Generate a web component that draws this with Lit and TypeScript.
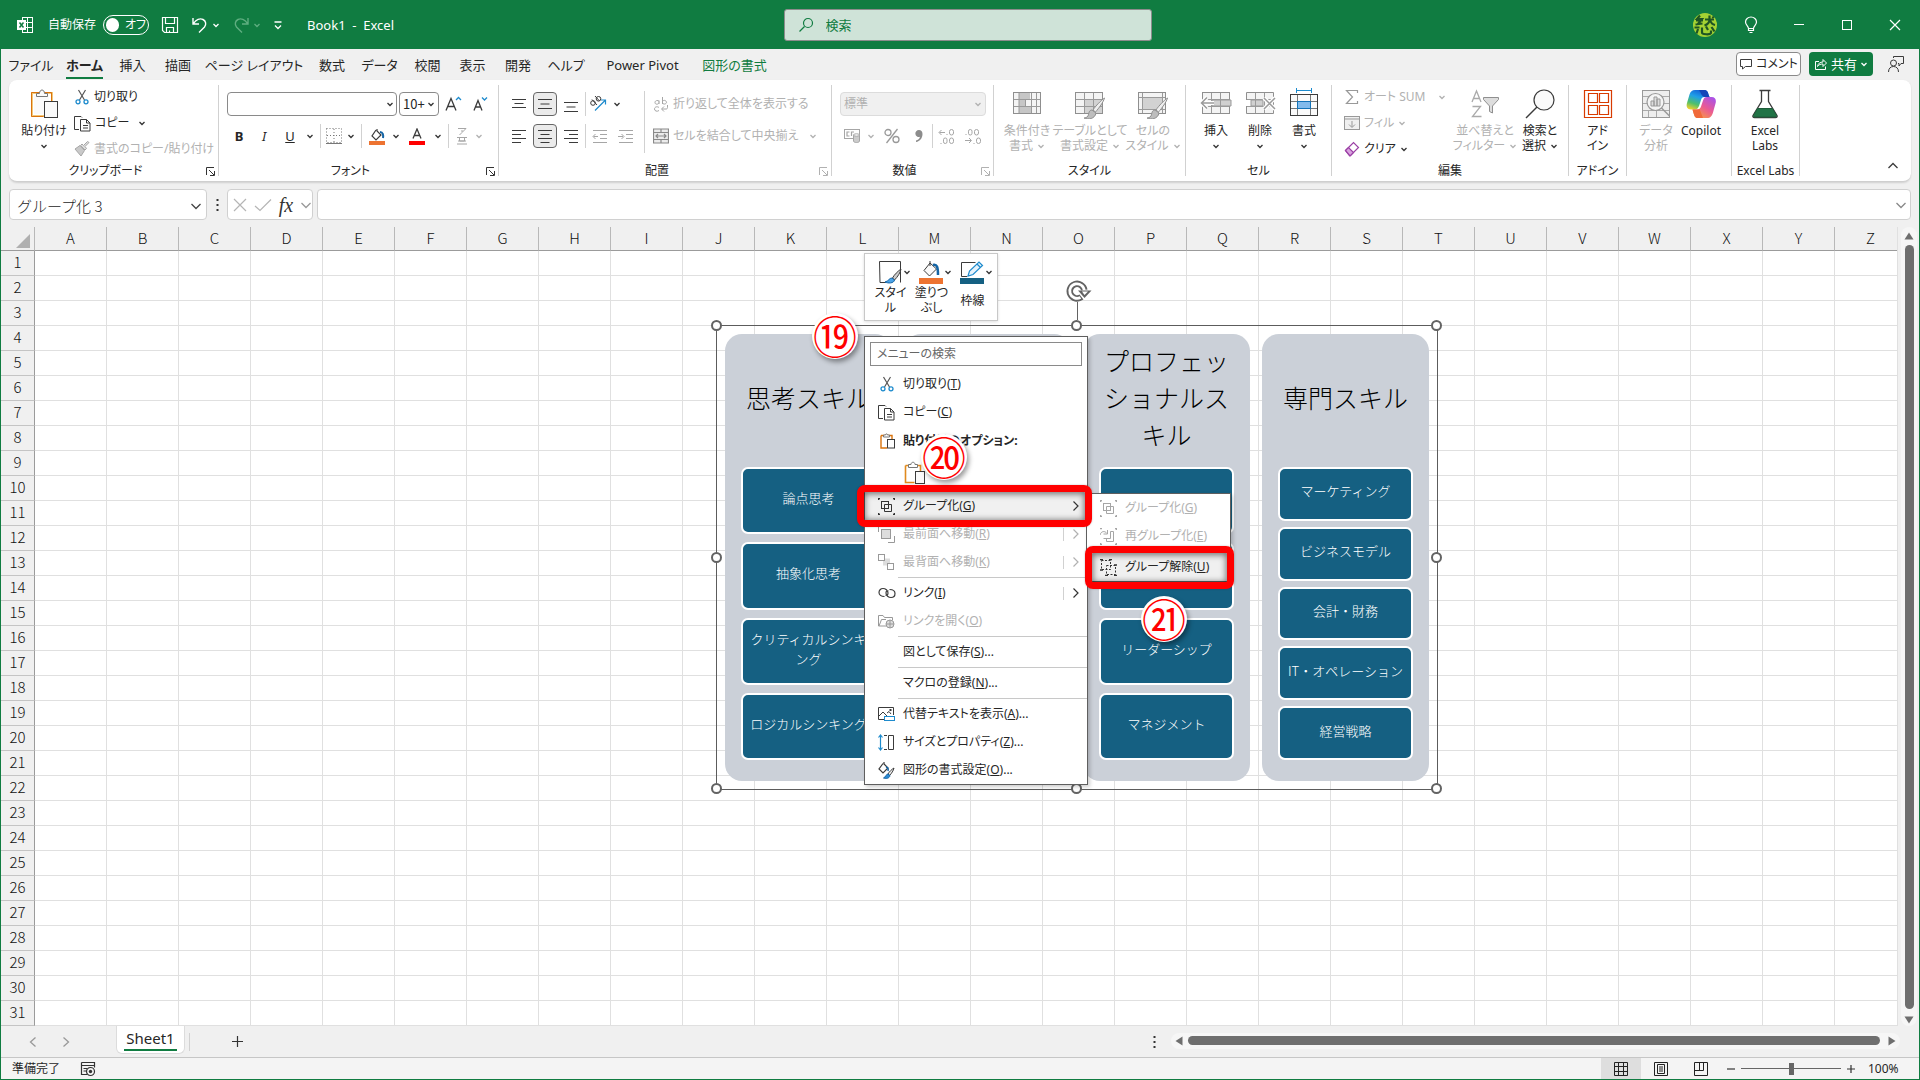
import { LitElement, html, svg, css, nothing, TemplateResult, SVGTemplateResult } from "lit";
import { customElement } from "lit/decorators.js";
import { classMap } from "lit/directives/class-map.js";

type Part = SVGTemplateResult | SVGTemplateResult[];

const icon = (w: number, h: number, body: Part): TemplateResult => html`
  <svg width=${w} height=${h} viewBox="0 0 ${w} ${h}" fill="none" stroke="#3b3b3b" aria-hidden="true">${body}</svg>
`;

const chevron = (color = "#333") => icon(8, 8, svg`<path d="M1.5 3 4 5.5 6.5 3" stroke=${color} stroke-width="1.3"/>`);
const wideChevron = (color = "#444") => icon(12, 12, svg`<path d="M1.5 4 6 8.5 10.5 4" stroke=${color} stroke-width="1.3"/>`);

const GRAY = "#a6a6a6";

const I = {
  excel: icon(18, 18, svg`<rect x="6.5" y="1.5" width="10" height="15" stroke="#fff"/><path d="M6 6.5h11M6 11.5h11M11.5 2v15" stroke="#fff"/><rect x="1" y="4" width="9" height="10" fill="#fff" stroke="none"/><path d="M3.5 6.5l4 5M7.500 6.500l-4 5" stroke="#107c41" stroke-width="1.500"/>`),
  save: icon(18, 18, svg`<path d="M1.500 1.500h15v15h-13l-2-2zM4.500 2v5.500h9V2M5.500 16.500v-5h7v5M8.500 16.500v-2" stroke="#fff" stroke-width="1.200"/>`),
  undo: icon(18, 18, svg`<path d="M2 2v6h6M2.500 7.500C5 3.500 9 2 12 3.500s3.500 5 1.500 7.500L8 16.500" stroke="#fff" stroke-width="1.400"/>`),
  redo: icon(18, 18, svg`<path d="M16 2v6h-6M15.500 7.500C13 3.500 9 2 6 3.500S2.500 8.500 4.500 11l5.500 5.500" stroke="#5fae80" stroke-width="1.400"/>`),
  customize: icon(10, 10, svg`<path d="M1.500 2h7M2 5.500 5 8.500 8 5.500" stroke="#fff" stroke-width="1.300"/>`),
  search: icon(16, 16, svg`<circle cx="10" cy="6" r="4.500" stroke="#107c41" stroke-width="1.200"/><path d="M6.500 9.500 1.500 14.500" stroke="#107c41" stroke-width="1.200"/>`),
  avatar: icon(24, 24, svg`<circle cx="12" cy="12" r="12" fill="#a4d233" stroke="none"/><path d="M7 2.500 4 6h5L4.500 11.500M3 7.500h7M2.500 11.500l7-1M12 6.500h9M16.500 2.500v4c0 3-2 5-5 6M17 7c1 3 2.500 4.500 5 5M19.500 3.500l1 1.500M5 16l-1.500 4.500M9 14.500v5c0 2 8 2.500 9 .5v-2.500M13 13.500l2 3.500M18.500 14l3 4.500M1.500 14.500h5" stroke="#1e5424" stroke-width="2.200"/>`),
  bulb: icon(14, 18, svg`<path d="M4.500 12.500C4.500 10 1.500 9 1.500 6a5.500 5 0 0 1 11 0c0 3-3 4-3 6.500zM4.500 12.500v2h5v-2M5.500 16.500h3" stroke="#fff" stroke-width="1.200"/>`),
  min: icon(12, 12, svg`<path d="M1 5.500h10" stroke="#fff"/>`),
  max: icon(12, 12, svg`<rect x="1.500" y="1.500" width="9" height="9" stroke="#fff"/>`),
  close: icon(12, 12, svg`<path d="M1 1 11 11M11 1 1 11" stroke="#fff" stroke-width="1.200"/>`),
  comment: icon(14, 14, svg`<path d="M1.500 2.500h11v7h-6l-3 2.500v-2.500h-2z"/>`),
  share: icon(14, 14, svg`<path d="M5 4.500H1.500v8h10V9.500M3.500 9.500C4 6.500 6 5 9 5V2.500l3.500 3.500L9 9.500V7C6.500 7 5 7.500 3.500 9.500z" stroke="#fff"/>`),
  person: icon(18, 18, svg`<circle cx="6.500" cy="8" r="3"/><path d="M1.500 17c0-3.500 2-5.500 5-5.500s5 2 5 5.500M6.500 3V1.500h10v7h-2.500l-2 2.500V8.500h-1"/>`),
  paste: icon(30, 30, svg`<rect x="3" y="4" width="20" height="23" fill="#fff"  stroke="#f2c879" stroke-width="2"/><path d="M2.500 3.500h20v11M2.500 3.500v24h12" stroke="#d9730d"/><rect x="5" y="6" width="15" height="19" fill="#fafafa" stroke="none"/><path d="M7.500 7.500v-3h3c0-2 1-3.500 2.500-3.500S15.500 2.500 15.500 4.500h3v3z" fill="#fafafa" stroke="#777"/><rect x="15.500" y="12.500" width="13" height="16" fill="#fafafa"/>`),
  cut: icon(16, 16, svg`<path d="M4.500 1 10.500 11M11.500 1 5.500 11" stroke="#555" stroke-width="1.200"/><circle cx="4" cy="12.800" r="2" stroke="#1e8bcd" stroke-width="1.300"/><circle cx="12" cy="12.800" r="2" stroke="#1e8bcd" stroke-width="1.300"/>`),
  copy: icon(17, 17, svg`<path d="M5 14.500H.500V1.500h6.500l1 1"/><path d="M6.500 4.500h6l3.500 3.500v8H6.500zM12.500 4.500V8H16M9 10.500h5M9 13h5"/>`),
  painter: icon(16, 16, svg`<path d="M1 8l5-3.500 4.500 5L7 15z" fill="#c9c9c9" stroke="${GRAY}"/><path d="M6.500 4.500 11 9l1.500-1.500-1.500-2L15 1.500 13.500.500 9.500 4.500 8 3z" fill="#ddd" stroke="${GRAY}"/>`),
  growA: icon(18, 18, svg`<path d="M2 15.500 7 3.500l5 12M4 11.500h6" stroke-width="1.300"/><path d="M12 5l2.500-2.500L17 5" stroke="#1e8bcd" stroke-width="1.300"/>`),
  shrinkA: icon(18, 18, svg`<path d="M3 15.500 7 5.500l4 10M4.500 12h5" stroke-width="1.300"/><path d="M11 2.500 13.500 5 16 2.500" stroke="#1e8bcd" stroke-width="1.300"/>`),
  borders: icon(16, 16, svg`<path d="M.500 .500h15v14H.500zM8 1v14M1 7.500h14" stroke="#777" stroke-dasharray="1 2"/><path d="M0 15.500h16" stroke="#777"/>`),
  fill: icon(16, 17, svg`<path d="M7 2 3 8l4 4 5-5-4-4V1" stroke-width="1.200"/><path d="M11 4c3 0 3.500 3 3 6" stroke="#1464a5" stroke-width="2"/><rect y="13" width="16" height="4" fill="#ed7331" stroke="none"/>`),
  fontColor: icon(16, 17, svg`<path d="M4 10.500 8 1l4 9.500M5.500 7.500h5" stroke-width="1.300"/><rect y="13" width="16" height="4" fill="#f00" stroke="none"/>`),
  phonetic: icon(12, 18, svg`<path d="M2 1.500h8L6.500 5M6 3v2.500L3.500 8M1 10.500h10M3.500 11v3h5v-3M2 14h8M1 17h10" stroke="${GRAY}"/>`),
  top: icon(16, 16, svg`<path d="M1 3.500h14M3.500 7.500h9M1 11.500h14"/>`),
  mid: icon(16, 16, svg`<path d="M1 3.500h14M3.500 8h9M1 12.500h14"/>`),
  bot: icon(16, 16, svg`<path d="M1 6.500h14M3.500 11h9M1 15.500h14"/>`),
  left: icon(16, 16, svg`<path d="M1 2.500h14M1 6.500h9M1 10.500h14M1 14.500h9"/>`),
  center: icon(16, 16, svg`<path d="M1 2.500h14M3.500 6.500h9M1 10.500h14M3.500 14.500h9"/>`),
  right: icon(16, 16, svg`<path d="M1 2.500h14M6 6.500h9M1 10.500h14M6 14.500h9"/>`),
  orient: icon(18, 18, svg`<path d="M6 15.500 16 5.500M12 5h4.500v4.500" stroke="#1e8bcd" stroke-width="1.200"/><circle cx="4" cy="8" r="2.300"/><path d="M3 4.500l5 5.500M6 1l4.500 5"/><circle cx="9.500" cy="3.800" r="2.300"/>`),
  outdent: icon(16, 16, svg`<path d="M1 2.500h14M8 6.500h7M8 10.500h7M1 14.500h14M6 8.500H1.500M3.500 6 1 8.500 3.500 11" stroke="${GRAY}"/>`),
  indent: icon(16, 16, svg`<path d="M1 2.500h14M8 6.500h7M8 10.500h7M1 14.500h14M0 8.500h5M3.500 6 6 8.500 3.500 11" stroke="${GRAY}"/>`),
  wrap: icon(16, 17, svg`<path d="M6 4.500v3.500M6 5.500c0-1.500-4-1.500-4 1s4 2 4 0M9.500 1v7M9.500 5.500c1-2 4-1 4 .8s-3 2.500-4 .7M6 11.500c-2-1.500-4.500-.5-4.500 1.500s2.500 3 4.500 1.500M14.500 9v2.500c0 1-.5 1.500-1.500 1.500H9M11 10.500 8.500 13l2.500 2.500" stroke="${GRAY}"/>`),
  merge: icon(16, 16, svg`<path d="M.500 1h15v14H.500zM.500 4.500h15M.500 11.500h15M8 1v3.500M8 11.500V15M3 8h10M5 6 3 8l2 2M11 6l2 2-2 2" stroke="#8a8a8a" stroke-width="1.200" fill="#ececec"/>`),
  currency: icon(17, 14, svg`<rect x=".500" y=".500" width="15" height="9" stroke="${GRAY}"/><path d="M5.500 3H3v4h2.500M7.500 7V3h2.500" stroke="${GRAY}" stroke-width="1.200"/><path d="M9.500 6v6c0 2 6 2 6 0V6z" fill="#ccc" stroke="${GRAY}"/><ellipse cx="12.500" cy="6" rx="3" ry="1.200" fill="#fff" stroke="${GRAY}"/>`),
  percent: icon(16, 16, svg`<circle cx="4" cy="4.500" r="3" stroke="#999" stroke-width="1.300"/><circle cx="12" cy="11.500" r="3" stroke="#999" stroke-width="1.300"/><path d="M13.500 1 2.500 15" stroke="#999" stroke-width="1.300"/>`),
  comma: icon(10, 14, svg`<path d="M5 1a3.500 3.500 0 1 0 1 6.800C5.500 10 4 11 2 11.500v1.500c4-.5 6.500-4 6.500-8C8.500 2.500 7 1 5 1z" fill="#8c8c8c" stroke="none"/>`),
  decInc: icon(18, 17, svg`<path d="M7 4.500H1.500M3.500 2 1 4.500 3.500 7M9 6v1" stroke="${GRAY}"/><rect x="11.500" y="1.500" width="4" height="5.500" rx="2" stroke="${GRAY}"/><rect x="5.500" y="10" width="3.500" height="5.500" rx="1.700" stroke="${GRAY}"/><rect x="11.500" y="10" width="4" height="5.500" rx="2" stroke="${GRAY}"/><path d="M3 15v1" stroke="${GRAY}"/>`),
  decDec: icon(18, 17, svg`<path d="M1 12.500h6M5 10l2.500 2.500L5 15M2 6v1M10 15v1" stroke="${GRAY}"/><rect x="4.500" y="1.500" width="3.500" height="5.500" rx="1.700" stroke="${GRAY}"/><rect x="10.500" y="1.500" width="4" height="5.500" rx="2" stroke="${GRAY}"/><rect x="12.500" y="10" width="4" height="5.500" rx="2" stroke="${GRAY}"/>`),
  condFmt: icon(30, 30, svg`<rect x="1.500" y="3.500" width="27" height="21" fill="#f4f4f4" stroke="#8f8f8f"/><path d="M7 4h11v6H7zM7 11h6v6H7zM7 18h12v6H7z" fill="#c6c6c6" stroke="none"/><path d="M2 10.500h26M2 17.500h26M7 4v20M13.500 11v6M19.500 4v20M24.500 4v20" stroke="#9a9a9a"/>`),
  tableFmt: icon(32, 30, svg`<rect x="1.500" y="3.500" width="27" height="21" fill="#f4f4f4" stroke="#8f8f8f"/><path d="M11 11h17v13H11z" fill="#d2d2d2" stroke="none"/><path d="M2 10.500h26M2 17.500h26M10.500 4v20M19.500 4v20" stroke="#9a9a9a"/><path d="M30.500 9c-3 2-9 8-11.500 12l2.500 2C25 19 29.500 13 30.500 9z" fill="#eee" stroke="#8f8f8f"/><path d="M18 21c-3 0-3 3-4 6-1 1.500-3 2-4 2 4 2 11 1 12-5z" fill="#bdbdbd" stroke="#8f8f8f"/>`),
  cellFmt: icon(32, 30, svg`<rect x="1.500" y="3.500" width="27" height="21" fill="#f4f4f4" stroke="#8f8f8f"/><rect x="6" y="9" width="19" height="11" fill="#d2d2d2" stroke="none"/><path d="M2 8.500h26M2 20.500h26M5.500 4v20M25.500 4v20" stroke="#9a9a9a"/><path d="M30.500 9c-3 2-9 8-11.500 12l2.500 2C25 19 29.500 13 30.500 9z" fill="#eee" stroke="#8f8f8f"/><path d="M18 21c-3 0-3 3-4 6-1 1.500-3 2-4 2 4 2 11 1 12-5z" fill="#bdbdbd" stroke="#8f8f8f"/>`),
  insert: icon(32, 30, svg`<rect x="2.500" y="3.500" width="27" height="21" fill="#f4f4f4" stroke="#8f8f8f"/><path d="M12 11h19v6H12z" fill="#d0d0d0" stroke="#9a9a9a"/><path d="M3 10.500h26M3 17.500h26M11.500 4v20M20.500 4v20" stroke="#9a9a9a"/><path d="M14 14H2M7 8.500 1.500 14 7 19.500" stroke="#fff" stroke-width="4"/><path d="M14 14H2M7 8.500 1.500 14 7 19.500" stroke="#9a9a9a" stroke-width="1.500"/>`),
  remove: icon(32, 30, svg`<path d="M2.500 3.500h27v21h-27z" fill="#f4f4f4" stroke="#8f8f8f"/><path d="M2 11h5v6H2z" fill="#fff" stroke="none"/><path d="M7 11h12v6H7z" fill="#d0d0d0" stroke="#9a9a9a"/><path d="M3 10.500h26M3 17.500h26M11.500 4v20M20.500 4v20" stroke="#9a9a9a"/><path d="M20 9l11 11M31 9 20 20" stroke="#fff" stroke-width="4"/><path d="M20 9l11 11M31 9 20 20" stroke="#9a9a9a" stroke-width="1.500"/>`),
  format: icon(30, 32, svg`<path d="M7 2.500h15M7.500 0v5M22.500 0v5" stroke="#1e8bcd"/><rect x="1.500" y="6.500" width="27" height="21" fill="#fafafa"/><path d="M2 13.500h26M2 20.500h26M8.500 7v20M21.500 7v20" stroke="#777"/><rect x="8.500" y="13.500" width="13" height="7" fill="#83bbec" stroke="#1473b8"/>`),
  sum: icon(16, 16, svg`<path d="M13.500 4V1.500h-11L8.500 8l-6 6.500h11V12" stroke="#999" stroke-width="1.200"/>`),
  fillDown: icon(16, 16, svg`<rect x=".500" y="1.500" width="15" height="13" fill="#f0f0f0" stroke="#999"/><path d="M1 4h14M8 6v6M5 9.500l3 3 3-3" stroke="#999"/>`),
  erase: icon(16, 16, svg`<path d="M1.500 9.500 9.500 1.500l5 5-8 8h-1z" stroke="#9b3fa5" stroke-width="1.200" fill="#fff"/><path d="M1.500 9.500 4.500 6.500l5 5-3.500 3.500z" fill="#d9a3df" stroke="#9b3fa5" stroke-width="1.200"/>`),
  sort: icon(30, 30, svg`<path d="M2 13 6.500 2l4.500 11M3.500 9.500h6M2.500 17.500h8l-8 10h9" stroke="#aaa" stroke-width="1.300"/><path d="M13.500 8.500h15v2l-6 6.500v7l-3 -1.500V17l-6-6.500z" fill="#ddd" stroke="#8f8f8f"/>`),
  find: icon(30, 30, svg`<circle cx="19" cy="11" r="10" fill="#fafafa" stroke-width="1.200"/><path d="M12 18 1 29" stroke-width="1.400"/>`),
  addin: icon(30, 30, svg`<path d="M1.500 1.500h27v27h-27zM5.500 4.500h9v9h-9zM16.500 4.500h9v9h-9zM5.500 16.500h9v9h-9zM16.500 16.500h9v9h-9z" stroke="#d83b01" stroke-width="1.200"/>`),
  analyze: icon(30, 30, svg`<rect x="1.500" y="1.500" width="27" height="27" fill="#eee" stroke="#999"/><path d="M2 7.500h26M2 14.500h26M2 21.500h26M7.500 22v6M15.500 22v6" stroke="#aaa"/><circle cx="14.500" cy="13" r="8.500" fill="#f4f4f4" stroke="#999" stroke-width="1.200"/><path d="M10 12h3v5h-3zM13 8h3v9h-3zM16 10h3v7h-3z" fill="#ddd" stroke="#999"/><path d="M20.500 19l8 8" stroke="#999" stroke-width="1.500"/>`),
  copilot: icon(30, 30, svg`
    <defs>
      <linearGradient id="ca" x1=".6" y1="0" x2=".2" y2="1"><stop offset="0" stop-color="#1460d8"/><stop offset=".35" stop-color="#1f9fe8"/><stop offset=".7" stop-color="#4fc06a"/><stop offset="1" stop-color="#f3d02b"/></linearGradient>
      <linearGradient id="cb" x1=".9" y1="0" x2=".2" y2="1"><stop offset="0" stop-color="#a552ee"/><stop offset=".5" stop-color="#ea5a94"/><stop offset="1" stop-color="#f9a13c"/></linearGradient>
    </defs>
    <path d="M18 1c3 0 4 2 4.500 4.500L23.500 8h-5c-2 0-3 1-3.500 3l-2 6c-1 2.500-2 3.500-4.500 3.500H5C1 20.500 0 17.500 1 14L3.500 5.500C4.500 2.500 6 1 9 1z" fill="url(#ca)" stroke="none"/>
    <path d="M13 1h5c3 0 4 2 4.500 4.500L23.500 8h-5C16 8 15 4 13 1z" fill="#1546b8" stroke="none"/>
    <path d="M12 29c-3 0-3.500-2-4.500-5l-1-3.500H11c2 0 3.500-1 4-3l2-6c1-2.500 1.500-3.500 4-3.500h4.500c4 0 5 3 4 6.500L27 23.500c-1 3.500-2.500 5.500-6 5.500z" fill="url(#cb)" stroke="none"/>
    <path d="M12 29c-3 0-3.500-2-4.500-5l-1-3.500H11c1 0 2 0 2.500-.5L17 29z" fill="#f06a3a" stroke="none"/>`),
  labs: icon(30, 30, svg`<path d="M11.500 1.500v11L3 26.500c-.5 1 0 2 1.500 2h21c1.500 0 2-1 1.500-2l-8.500-14v-11M9.500 1.500h11" fill="#fff" stroke-width="1.300"/><path d="M7.500 19.500h15l4 7c.5 1-.5 1.500-1.500 1.500H5c-1 0-2-.5-1.500-1.500z" fill="#217346" stroke="#1d5c39"/>`),
  launcher: (c: string) => icon(9, 9, svg`<path d="M.500 8V.500H8M3 3l5 5M8.500 4v4.500H4" stroke=${c}/>`),
  group: (c: string) => icon(17, 17, svg`<rect x="3.500" y="3.500" width="7" height="7" stroke=${c}/><path d="M6.500 6.500h7v7h-7z" stroke=${c}/><path d="M0 .500h2M15 .500h2M0 16.500h2M15 16.500h2M.500 0v2M16.500 0v2M.500 15v2M16.500 15v2" stroke=${c} stroke-width="1.500"/>`),
  regroup: (c: string) => icon(17, 17, svg`<path d="M10.500 3.500h3v10h-7v-3M0 7c1-4 5-4.500 7-1.500M7.500 2v4H3.500M10.500 3.500v7h-7" stroke=${c}/><path d="M0 .500h2M15 .500h2M0 16.500h2M15 16.500h2M.500 15v2M16.500 0v2M16.500 15v2" stroke=${c} stroke-width="1.500"/>`),
  ungroup: (c: string) => icon(17, 17, svg`<path d="M1.500 1.500h9v9h-9zM6.500 6.500h9v9h-9z" stroke=${c} stroke-dasharray="2 1.500"/><path d="M0 .500h3M9 .500h3M0 11h3M5 16.500h3M14 16.500h3M14 6h3" stroke=${c} stroke-width="1.500"/>`),
  front: icon(17, 17, svg`<rect x="3.500" y="3.500" width="9" height="9" fill="#ddd" stroke="#999"/><path d="M.500 6V.500H7M16.500 10v6.500H10" stroke="#999"/>`),
  back: icon(17, 17, svg`<rect x="5" y="4.500" width="7" height="7" fill="#ddd" stroke="none"/><rect x=".500" y=".500" width="6" height="6" fill="#fff" stroke="#999"/><rect x="9.500" y="9.500" width="6" height="6" fill="#fff" stroke="#999"/>`),
  link: icon(18, 16, svg`<path d="M6.500 11.500C3 11.500 1 9.500 1 7.500s1.500-4 4-4 5 2 5 4.500-1.500 2.500-2.500 2M11.500 4.500c3.500 0 5.500 1.500 5.500 4s-1.500 4-4 4-5-2-5-4.500 1.500-2.500 2.500-2" stroke-width="1.200"/>`),
  openLink: icon(17, 16, svg`<path d="M8 13H.500V2.500H5L6.500 4.500h8V7M1 13 3.500 6.500H8" stroke="#999"/><circle cx="12" cy="11" r="4" fill="#ddd" stroke="#999"/><path d="M8 11h8M12 7v8" stroke="#999"/>`),
  alt: icon(17, 16, svg`<path d="M6 13.500H.500v-12h15V9M1 10l4-4 4 4M9 7l2-1.500 2 2.500"/><rect x="12" y="3.500" width="1" height="1"/><rect x="6.500" y="10.500" width="10" height="4" stroke="#1e8bcd" fill="#fff"/>`),
  size: icon(17, 17, svg`<path d="M2.500 1v15M.500 3.500l2-2.500 2 2.500M.500 13.500l2 2.500 2-2.500" stroke="#1e8bcd" stroke-width="1.200"/><path d="M10.500 1.500h5v14h-5z"/><path d="M6 1.500h4M6 15.500h4" stroke-dasharray="3 1"/>`),
  shapeFmt: icon(17, 17, svg`<path d="M5 1.500 1 7l4 4 5-5-4-4V0" stroke-width="1.200"/><path d="M8 5c2 .5 2.500 2 2 4" stroke="#1464a5" stroke-width="1.500"/><path d="M16 6c-2 1-5 4-6 6l1.500 1.500C13.500 11.500 15.500 8.500 16 6z" fill="#eee"/><path d="M10 12c-2 0-2 3-4.500 4 2.500 1 6 .5 6.500-2.500z" fill="#2b8ad4" stroke="#1464a5"/>`),
  pasteSm: icon(16, 17, svg`<path d="M2 3.500h11V8M2 3.500v12.500h6" stroke="#d9730d" stroke-width="1.400"/><path d="M4.500 5V3h2c0-1.500 2-1.500 2 0h2v2z" fill="#fff" stroke="#777"/><rect x="8.500" y="7.500" width="7" height="8.500" fill="#fff"/>`),
  pasteMd: icon(22, 24, svg`<path d="M1.500 4.500h15v6M1.500 4.500v17h9" stroke="#e08a1e" stroke-width="1.600"/><path d="M4.500 6.500v-3h2.500c0-3 4-3 4 0h2.500v3z" fill="#fff" stroke="#777"/><rect x="11.500" y="10.500" width="9" height="12" fill="#fafafa"/>`),
  shapeStyle: icon(24, 24, svg`<path d="M8 22.500H2L1.500 1.500h21V22.500"/><path d="M23 9c-3 2-7 6-8.500 9l2 2C19.500 17 22.500 12.500 23 9z" fill="#ccc"/><path d="M14 18c-3 0-3 3-7 4 3 1.500 9 1.500 9.500-2z" fill="#4aa3e8" stroke="#1464a5"/>`),
  shapeFill: icon(24, 24, svg`<path d="M11 1v5M11 3 5 10.500l5.500 5.500 7-7L11 3z" fill="#fafafa"/><path d="M14 5c4-1 5 2 5 10" stroke="#1464a5" stroke-width="2.500"/><rect y="18" width="24" height="6" fill="#ed7331" stroke="none"/>`),
  shapeLine: icon(24, 24, svg`<path d="M7 16.500H1.500v-14h14"/><path d="M8 16l1.500-5L19 2l3.500 3.500-9.500 9zM17 4l3.500 3.500" stroke="#1e8bcd" fill="#e6f2fb" stroke-width="1.200"/><rect y="18" width="24" height="6" fill="#156082" stroke="none"/>`),
  rotate: icon(26, 22, svg`<path d="M15.500 17A7.300 7.300 0 1 1 18.300 10" stroke="#636363" stroke-width="6.500"/><path d="M14.500 17.500A7.300 7.300 0 1 1 18.300 11" stroke="#fff" stroke-width="2.800"/><path d="M12 10.500h13.500L18.500 18z" fill="#636363" stroke="none"/><path d="M16 11.500h6L18.500 15z" fill="#fff" stroke="none"/>`),
  macro: icon(16, 16, svg`<path d="M1.500 1.500h13v5M1.500 1.500v12H7M1.500 4.500h13M3.500 7.500H7M3.500 10H6" stroke="#333" stroke-width="1.200"/><circle cx="10.500" cy="10.500" r="4" stroke="#333" stroke-width="1.200"/><circle cx="10.500" cy="10.500" r="1.700" fill="#333" stroke="none"/>`),
  normal: icon(14, 14, svg`<path d="M.500 .500h13v13H.500zM1 4.500h12M1 9.500h12M4.500 1v12M9.500 1v12" stroke="#222"/>`),
  page: icon(14, 14, svg`<path d="M.500 .500h13v13H.500zM3.500 2.500h7v9h-7zM5 5h4M5 7h4M5 9h4" stroke="#222"/>`),
  breaks: icon(14, 14, svg`<path d="M.500 .500h13v13H.500zM5.500 1v7M9.500 1v7.500H1" stroke="#222"/>`),
  plus: (n: number) => icon(n, n, svg`<path d="M0 ${n / 2}h${n}M${n / 2} 0v${n}" stroke="#333" stroke-width="1.200"/>`),
  minus: icon(8, 8, svg`<path d="M0 4h8" stroke="#333" stroke-width="1.200"/>`),
  prev: icon(8, 12, svg`<path d="M6.500 1.500 1.500 6l5 4.500" stroke="#999" stroke-width="1.300"/>`),
  next: icon(8, 12, svg`<path d="M1.500 1.500 6.500 6l-5 4.500" stroke="#999" stroke-width="1.300"/>`),
  dots: icon(3, 12, svg`<path d="M.500 0h2v2h-2zM.500 5h2v2h-2zM.500 10h2v2h-2z" fill="#333" stroke="none"/>`),
  cancel: icon(14, 14, svg`<path d="M1 1l12 12M13 1 1 13" stroke="#b5b5b5" stroke-width="1.200"/>`),
  check: icon(18, 14, svg`<path d="M1 8l5 4.500L17 1.500" stroke="#b5b5b5" stroke-width="1.200"/>`),
  up: icon(10, 8, svg`<path d="M5 .500 9.500 7.500H.500z" fill="#6e6e6e" stroke="none"/>`),
  down: icon(10, 8, svg`<path d="M5 7.500 9.500 .500H.500z" fill="#6e6e6e" stroke="none"/>`),
  back2: icon(8, 10, svg`<path d="M.500 5 7.500 .500v9z" fill="#6e6e6e" stroke="none"/>`),
  fwd: icon(8, 10, svg`<path d="M7.500 5 .500 .500v9z" fill="#6e6e6e" stroke="none"/>`),
  corner: icon(16, 16, svg`<path d="M15 1v14H1z" fill="#b0b0b0" stroke="none"/>`),
  sub: (c: string) => icon(8, 12, svg`<path d="M1.500 1.500 6 6l-4.500 4.500" stroke=${c} stroke-width="1.200"/>`),
};

interface MenuRow {
  sep?: boolean;
  label?: string;
  key?: string;
  tail?: string;
  glyph?: TemplateResult;
  off?: boolean;
  sub?: "plain" | "split";
  hot?: boolean;
}

const MENU: MenuRow[] = [
  { label: "グループ化", key: "G", glyph: I.group("#333"), sub: "plain", hot: true },
  { label: "最前面へ移動", key: "R", glyph: I.front, off: true, sub: "split" },
  { label: "最背面へ移動", key: "K", glyph: I.back, off: true, sub: "split" },
  { sep: true },
  { label: "リンク", key: "I", glyph: I.link, sub: "split" },
  { label: "リンクを開く", key: "O", glyph: I.openLink, off: true },
  { sep: true },
  { label: "図として保存", key: "S", tail: "..." },
  { sep: true },
  { label: "マクロの登録", key: "N", tail: "..." },
  { sep: true },
  { label: "代替テキストを表示", key: "A", tail: "...", glyph: I.alt },
  { label: "サイズとプロパティ", key: "Z", tail: "...", glyph: I.size },
  { label: "図形の書式設定", key: "O", tail: "...", glyph: I.shapeFmt },
];

const SUBMENU: MenuRow[] = [
  { label: "グループ化", key: "G", glyph: I.group(GRAY), off: true },
  { label: "再グループ化", key: "E", glyph: I.regroup(GRAY), off: true },
  { sep: true },
  { label: "グループ解除", key: "U", glyph: I.ungroup("#333"), hot: true },
];

const TABS = ["ファイル", "ホーム", "挿入", "描画", "ページ レイアウト", "数式", "データ", "校閲", "表示", "開発", "ヘルプ", "Power Pivot", "図形の書式"];

const CARDS: { title: string; items: string[] }[] = [
  { title: "思考スキル", items: ["論点思考", "抽象化思考", "クリティカルシンキング", "ロジカルシンキング"] },
  { title: "", items: [] },
  { title: "プロフェッショナルスキル", items: ["", "", "リーダーシップ", "マネジメント"] },
  { title: "専門スキル", items: ["マーケティング", "ビジネスモデル", "会計・財務", "IT・オペレーション", "経営戦略"] },
];

const COLS = "ABCDEFGHIJKLMNOPQRSTUVWXYZ".split("");
const ROWS = Array.from({ length: 31 }, (_, i) => i + 1);

@customElement("app-root")
export class AppRoot extends LitElement {
  static styles = css`
    :host {
      display: block;
      font: 12px/16px "Noto Sans", "Noto Sans CJK JP", sans-serif;
      font-feature-settings: "palt";
      color: #262626;
    }
    * { box-sizing: border-box; }
    svg { display: block; flex: none; }
    button, input, select {
      font: inherit;
      font-feature-settings: inherit;
      color: inherit;
      background: none;
      border: 0;
      padding: 0;
      margin: 0;
    }
    button { display: inline-flex; align-items: center; justify-content: center; white-space: nowrap; flex: none; }
    button:disabled, .off { color: #b1b1b1; }

    .app {
      min-height: 100vh;
      display: grid;
      grid-template-rows: auto auto auto auto 1fr auto auto;
      border: 1px solid #107c41;
      border-top: 0;
      background: #f0f0f0;
      overflow: hidden;
    }

    /* title bar */
    .title {
      height: 49px;
      display: grid;
      grid-template-columns: minmax(0, 1fr) 368px minmax(0, 1fr);
      align-items: center;
      padding-left: 15px;
      background: #107c41;
      color: #fff;
    }
    .quick, .wincontrols { display: flex; align-items: center; }
    .quick { gap: 12px; }
    .auto { display: flex; align-items: center; gap: 7px; margin-left: 2px; }
    .toggle {
      appearance: none;
      display: flex;
      align-items: center;
      gap: 6px;
      width: 46px;
      height: 20px;
      border: 1px solid #fff;
      border-radius: 10px;
      justify-content: flex-start;
      padding: 0 2px;
    }
    .knob { width: 14px; height: 14px; border-radius: 7px; background: #fff; }
    .pair { display: flex; align-items: center; gap: 3px; }
    .book { font-size: 13px; white-space: pre; margin-left: 12px; }
    .find {
      height: 32px;
      display: flex;
      align-items: center;
      gap: 12px;
      padding: 0 13px;
      background: #cfe3d8;
      border: 1px solid #8c8c8c;
      border-radius: 3px;
    }
    .find input { flex: 1; font-size: 13px; color: #107c41; outline: none; min-width: 0; }
    .find input::placeholder { color: #107c41; }
    .wincontrols { justify-content: flex-end; }
    .wincontrols button { width: 48px; height: 48px; }
    .wincontrols .me { width: 44px; }

    /* ribbon tabs */
    .tabs { display: flex; justify-content: space-between; height: 31px; }
    .tablist {
      display: grid;
      grid-template-columns: 60px 47px 49px 42px 110px 46px 49px 47px 43px 48px 48px 105px 79px;
    }
    .tab { font-size: 13px; height: 31px; }
    .tab span { padding: 6px 0 2px; border-bottom: 2px solid transparent; line-height: 19px; }
    .tab.on { font-weight: 700; }
    .tab.on span { border-color: #107c41; }
    .tab.ctx { color: #107c41; }
    .actions { display: flex; align-items: center; gap: 8px; padding: 0 14px 1px 0; }
    .comment, .share { height: 24px; border-radius: 4px; gap: 3px; }
    .comment { width: 65px; border: 1px solid #8a8a8a; background: #fff; }
    .share { width: 64px; background: #107c41; color: #fff; font-size: 13px; }
    .person { margin-left: 6px; }

    /* ribbon */
    .ribbon {
      display: flex;
      margin: 0 8px;
      height: 102px;
      padding: 5px 0;
      background: #fff;
      border-radius: 8px;
      border-bottom: 1px solid #cfcfcf;
      box-shadow: 0 1px 2px #0002;
    }
    .grp { display: flex; flex-direction: column; justify-content: space-between; border-right: 1px solid #d1d1d1; flex: none; height: 91px; }
    .w-clip { width: 210px; }
    .w-font { width: 280px; }
    .w-align { width: 333px; }
    .w-num { width: 162px; }
    .w-style { width: 192px; }
    .w-cell { width: 146px; }
    .w-edit { width: 237px; }
    .w-add { width: 58px; }
    .w-data { width: 105px; }
    .w-labs { width: 68px; }
    .foot { display: flex; align-items: center; height: 10px; line-height: 10px; }
    .foot span { flex: 1; text-align: center; white-space: nowrap; }
    .foot button { width: 16px; height: 10px; }
    .body { display: flex; }
    .body.pad { padding-left: 8px; }
    .rows2 { display: flex; flex-direction: column; gap: 8px; padding-top: 7px; }
    .row { display: flex; align-items: center; height: 24px; }
    .row.g2 { gap: 2px; }
    .rows3 { display: flex; flex-direction: column; align-items: flex-start; gap: 2px; }
    .line { height: 24px; gap: 4px; }
    .spread { width: 164px; justify-content: flex-start; }
    .spread svg:last-child { margin-left: auto; }
    .apart { width: 102px; justify-content: flex-start; }
    .apart svg:last-child { margin-left: auto; }
    .copyline { width: 72px; justify-content: flex-start; }
    .copyline svg:last-child { margin-left: auto; }
    .big { flex-direction: column; justify-content: flex-start; gap: 4px; padding-top: 3px; }
    .big .cap { display: flex; flex-direction: column; align-items: center; line-height: 15px; }
    .big .pic { height: 31px; display: flex; align-items: center; }
    .big .cap span { display: flex; align-items: center; gap: 4px; height: 15px; }
    .b60 { width: 60px; }
    .b62 { width: 62px; }
    .b66 { width: 66px; }
    .b44 { width: 44px; }
    .b46 { width: 46px; }
    .b58 { width: 57px; }
    .pad5 { padding-left: 5px; }
    .pad3 { padding-left: 3px; }
    .pad6 { padding-left: 6px; }
    .pad12 { padding-left: 12px; }
    .t24 { width: 24px; height: 24px; }
    .t26 { width: 26px; height: 24px; }
    .t28 { width: 28px; height: 24px; }
    .t14 { width: 14px; height: 24px; }
    .t20 { width: 20px; height: 24px; }
    .sel { border: 1px solid #666; border-radius: 4px; background: #ebebeb; }
    .vr { width: 1px; height: 24px; background: #d1d1d1; flex: none; }
    .vr.m { margin: 0 3px; }
    .vr.tall { height: 62px; margin: 6px 8px 0 6px; }
    .bold { font-weight: 700; font-size: 13px; }
    .ital { font-style: italic; font-family: "Noto Sans", sans-serif; font-size: 13px; }
    .under { text-decoration: underline; font-size: 13px; }
    .combo { display: grid; grid-template-columns: 1fr 14px; align-items: center; height: 24px; border: 1px solid #8a8a8a; border-radius: 4px; background: #fff; }
    .combo select { grid-area: 1 / 1 / 2 / 3; appearance: none; height: 22px; padding-left: 3px; outline: none; font-size: 13px; }
    .combo svg { grid-area: 1 / 2; pointer-events: none; justify-self: center; }
    .combo.face svg { margin-left: 2px; }
    .face { width: 170px; }
    .pt { width: 40px; }
    .pt select { font-family: "Noto Sans CJK JP", sans-serif; }
    .numfmt { width: 146px; background: #f0f0f0; border-color: #dcdcdc; }
    .numfmt select { color: #b1b1b1; opacity: 1; font-size: 12px; }
    .fold { margin-left: auto; align-self: flex-end; width: 36px; height: 20px; }

    /* formula bar */
    .formula { display: flex; align-items: center; margin: 7px 8px 7px; height: 31px; }
    .box { display: flex; align-items: center; height: 31px; background: #fff; border: 1px solid #d0d0d0; border-radius: 4px; }
    .namebox { width: 198px; padding: 2px 4px 0 7px; font: 300 15px/20px "Noto Sans CJK JP", sans-serif; font-feature-settings: normal; }
    .namebox input { flex: 1; min-width: 0; outline: none; }
    .grip { width: 20px; display: flex; justify-content: center; }
    .fx { width: 86px; justify-content: space-between; padding: 0 0 0 5px; margin-right: 4px; }
    .fx em { font: italic 400 20px/20px "Liberation Serif", serif; color: #333; }
    .entry { flex: 1; padding-right: 3px; }
    .entry input { flex: 1; outline: none; padding: 0 8px; }

    /* sheet */
    .sheet { display: grid; grid-template-columns: minmax(0, 1fr) 21px; position: relative; }
    .view { overflow: hidden; border-right: 1px solid #e0e0e0; }
    table { table-layout: fixed; width: 1906px; border-spacing: 0; background: #fff; font: 300 15px/20px "Noto Sans CJK JP", sans-serif; }
    th, td { padding: 0; }
    th { font-weight: 300; color: #111; background: #f0f0f0; text-align: center; }
    thead th { height: 24px; width: 72px; padding-bottom: 2px; border-right: 1px solid #b8b8b8; border-bottom: 1px solid #9b9b9b; }
    thead th.corner { width: 34px; padding: 0; }
    .corner svg { margin: 5px 0 0 14px; }
    tbody th { height: 25px; padding-bottom: 3px; border-right: 1px solid #9b9b9b; border-bottom: 1px solid #c4c4c4; }
    td { border-right: 1px solid #e0e0e0; border-bottom: 1px solid #e0e0e0; }
    .vscroll { display: flex; flex-direction: column; align-items: center; gap: 5px; margin: 0 2px 0 3px; padding: 5px 0 2px; border-radius: 8px; background: #f6f6f6; }
    .vscroll .bar { flex: 1; width: 9px; border-radius: 5px; background: #6e6e6e; margin-bottom: 2px; }

    /* drawing layer */
    .layer { position: absolute; inset: 0; overflow: hidden; pointer-events: none; }
    .layer > * { position: absolute; }
    .frame { left: 715px; top: 98px; width: 722px; height: 465px; border: 1px solid #5c5c5c; }
    .frame i { position: absolute; width: 11px; height: 11px; border: 2px solid #636363; border-radius: 6px; background: #fff; margin: -6px 0 0 -6px; }
    .frame .stem { width: 1px; height: 18px; border: 0; border-radius: 0; background: #636363; left: 50%; top: -24px; margin: 0; }
    .spin { left: 1065px; top: 53px; }
    .cards { left: 724px; top: 107px; width: 704px; height: 447px; display: grid; grid-template-columns: repeat(4, 1fr); gap: 12px; }
    .card { display: grid; grid-template-rows: 133px 1fr; padding: 0 16px 21px; border-radius: 17px; background: #cbd0d8; }
    .card h2 { margin: 0; display: flex; align-items: center; justify-content: center; text-align: center; font: 300 25px/37px "Noto Sans CJK JP", sans-serif; font-feature-settings: normal; color: #000; padding-bottom: 6px; }
    .items { display: grid; grid-auto-rows: 1fr; gap: 6px; margin: 0; padding: 0; list-style: none; }
    .items.four { gap: 8px; }
    .items li { display: flex; align-items: center; justify-content: center; text-align: center; border: 2px solid #fff; border-radius: 7px; background: #156082; color: #fff; font: 300 13px/20px "Noto Sans CJK JP", sans-serif; font-feature-settings: normal; padding: 0 4px 5px; }

    .mini { left: 863px; top: 26px; width: 134px; height: 68px; display: flex; padding: 6px 4px 0 5px; border: 1px solid #c8c8c8; background: #fff; box-shadow: 0 1px 3px #0002; justify-content: space-between; }
    .mini button { flex-direction: column; justify-content: flex-start; width: 41px; white-space: normal; line-height: 15px; gap: 0; }
    .mini .pic { display: flex; align-items: center; gap: 1px; margin-left: 8px; }
    .mini .cap { display: flex; flex-direction: column; justify-content: center; height: 32px; width: 36px; text-align: center; }

    .menu { border: 1px solid #5f5f5f; background: #fff; display: flex; flex-direction: column; }
    .main { left: 863px; top: 109px; width: 224px; box-shadow: 2px 2px 4px #0003; }
    .submenu { left: 1085px; top: 266px; width: 145px; box-shadow: 2px 2px 4px #0003; }
    .menu input { margin: 5px 5px 4px; height: 24px; border: 1px solid #8a8a8a; padding: 0 6px 2px; outline: none; }
    .menu input::placeholder { color: #666; }
    .menu button, .menu .head { display: flex; justify-content: flex-start; align-items: center; height: 28px; padding: 0 7px 0 13px; gap: 8px; }
    .menu .head { height: 29px; font-weight: 700; margin: 0; }
    .menu .pasterow { height: 37px; padding-left: 39px; padding-bottom: 2px; }
    .menu .g { width: 17px; display: flex; justify-content: center; }
    .menu .arrow { margin-left: auto; display: flex; align-items: center; gap: 8px; }
    .menu .arrow .vr { height: 13px; }
    .menu hr { margin: 1px 0 1px 33px; height: 1px; border: 0; background: #c8c8c8; }
    .menu .hot { background: #f0f0f0; }

    .mark { border: 7px solid #f00; border-radius: 8px; box-shadow: inset 0 1px 6px 1px #0008, 0 0 2px #0004; }
    .mark1 { left: 856px; top: 258px; width: 235px; height: 42px; }
    .mark2 { left: 1084px; top: 319px; width: 149px; height: 43px; }
    .badge { width: 46px; height: 46px; border-radius: 23px; background: #fff; box-shadow: 2px 3px 5px #0006; color: #f00; font: 400 44px/44px "Noto Sans CJK JP", sans-serif; text-align: center; font-feature-settings: normal; }
    .n19 { left: 811px; top: 86px; }
    .n20 { left: 920px; top: 207px; }
    .n21 { left: 1140px; top: 369px; }

    /* sheet tabs */
    .sheets { display: flex; align-items: center; height: 31px; padding: 0 19px 0 28px; }
    .sheets .nav { display: flex; gap: 25px; align-items: center; }
    .sheettab { align-self: flex-start; margin-left: 46px; width: 69px; height: 28px; background: #fff; border: 1px solid #dcdcdc; border-top: 0; border-radius: 0 0 6px 6px; font-size: 15px; }
    .sheettab span { line-height: 20px; padding: 0 2px 1px; border-bottom: 2px solid #107c41; }
    .sheets .vr { height: 18px; margin-left: 4px; }
    .sheets .add { width: 24px; height: 24px; margin-left: 35px; }
    .sheets .split { margin-left: auto; }
    .hscroll { display: flex; align-items: center; gap: 5px; width: 729px; height: 16px; margin: 0 0 2px 15px; padding: 0 4px; border-radius: 8px; background: #f6f6f6; }
    .hscroll .bar { flex: 1; height: 9px; border-radius: 5px; background: #6e6e6e; margin-right: 3px; }

    /* status bar */
    .status { display: flex; align-items: center; height: 22px; padding: 0 18px 0 11px; background: #f4f4f4; border-top: 1px solid #c6c6c6; }
    .status .rec { margin-left: 20px; }
    .views { display: flex; margin-left: auto; }
    .views button { width: 40px; height: 21px; }
    .views .on { background: #dedede; }
    .zoom { display: flex; align-items: center; gap: 6px; margin-left: 6px; }
    .zoom input { appearance: none; width: 100px; height: 16px; background: linear-gradient(#666, #666) center / 100% 1px no-repeat; }
    .zoom input::-webkit-slider-thumb { appearance: none; width: 5px; height: 12px; background: #666; }
    .pct { margin-left: 13px; width: 33px; }
  `;

  private foot(label: string, launch?: "on" | "off") {
    return html`<div class="foot"><span>${label}</span>${launch
      ? html`<button aria-label="${label}の詳細" ?disabled=${launch === "off"}>${I.launcher(launch === "on" ? "#333" : "#b1b1b1")}</button>`
      : nothing}</div>`;
  }

  private big(cls: string, pic: TemplateResult, lines: string[], drop: boolean, off = false) {
    const chev = chevron(off ? "#b1b1b1" : "#333");
    return html`<button class="big ${cls}" ?disabled=${off}>
      <span class="pic">${pic}</span>
      <span class="cap">${lines.map((l, i) => html`<span>${l}${drop && i === lines.length - 1 ? chev : nothing}</span>`)}</span>
    </button>`;
  }

  private tool(cls: string, label: string, pic: TemplateResult | string, off = false) {
    return html`<button class=${cls} aria-label=${label} ?disabled=${off}>${pic}</button>`;
  }

  private drop(label: string, off = false) {
    return this.tool("t14", label, chevron(off ? "#b1b1b1" : "#333"), off);
  }

  private titleBar() {
    return html`<header class="title">
      <div class="quick">
        ${I.excel}
        <div class="auto"><span id="auto">自動保存</span>
          <button class="toggle" role="switch" aria-checked="false" aria-labelledby="auto"><span class="knob"></span>オフ</button>
        </div>
        <button aria-label="上書き保存">${I.save}</button>
        <div class="pair"><button aria-label="元に戻す">${I.undo}</button><button aria-label="元に戻す一覧">${chevron("#fff")}</button></div>
        <div class="pair"><button aria-label="やり直し" disabled>${I.redo}</button><button aria-label="やり直し一覧" disabled>${chevron("#5fae80")}</button></div>
        <button aria-label="クイック アクセス">${I.customize}</button>
        <span class="book">Book1  -  Excel</span>
      </div>
      <label class="find">${I.search}<input type="search" placeholder="検索" aria-label="検索"></label>
      <div class="wincontrols">
        ${this.tool("me", "アカウント", I.avatar)}
        ${this.tool("", "ヒント", I.bulb)}
        ${this.tool("", "最小化", I.min)}
        ${this.tool("", "最大化", I.max)}
        ${this.tool("", "閉じる", I.close)}
      </div>
    </header>`;
  }

  private tabRow() {
    return html`<nav class="tabs">
      <div class="tablist" role="tablist">
        ${TABS.map((t, i) => html`<button role="tab" class=${classMap({ tab: true, on: i === 1, ctx: i === 12 })} aria-selected=${i === 1}><span>${t}</span></button>`)}
      </div>
      <div class="actions">
        <button class="comment">${I.comment}コメント</button>
        <button class="share">${I.share}共有 ${chevron("#fff")}</button>
        <button class="person" aria-label="共同編集">${I.person}</button>
      </div>
    </nav>`;
  }

  private ribbon() {
    return html`<section class="ribbon">
      <div class="grp w-clip">
        <div class="body pad5">
          <button class="big b60"><span class="pic">${I.paste}</span><span class="cap"><span>貼り付け</span><span>${chevron()}</span></span></button>
          <div class="rows3">
            <button class="line">${I.cut}切り取り</button>
            <button class="line copyline">${I.copy}コピー${chevron()}</button>
            <button class="line" disabled>${I.painter}書式のコピー/貼り付け</button>
          </div>
        </div>
        ${this.foot("クリップボード", "on")}
      </div>

      <div class="grp w-font">
        <div class="body pad"><div class="rows2">
          <div class="row g2">
            <div class="combo face"><select aria-label="フォント"><option></option></select>${chevron()}</div>
            <div class="combo pt"><select aria-label="フォント サイズ"><option>10+</option></select>${chevron()}</div>
            ${this.tool("t24", "拡大", I.growA)}${this.tool("t26", "縮小", I.shrinkA)}
          </div>
          <div class="row">
            ${this.tool("t24 bold", "太字", "B")}${this.tool("t26 ital", "斜体", "I")}${this.tool("t26 under", "下線", "U")}${this.drop("下線の種類")}
            <span class="vr m"></span>
            ${this.tool("t20", "罫線", I.borders)}${this.drop("罫線の種類")}
            <span class="vr m"></span>
            ${this.tool("t24", "塗りつぶし", I.fill)}${this.drop("塗りつぶしの色")}${this.tool("t28", "文字色", I.fontColor)}${this.drop("文字色の選択")}
            <span class="vr m"></span>
            ${this.tool("t20", "ふりがな", I.phonetic, true)}${this.drop("ふりがなの設定", true)}
          </div>
        </div></div>
        ${this.foot("フォント", "on")}
      </div>

      <div class="grp w-align">
        <div class="body pad">
          <div class="rows2">
            <div class="row g2">
              ${this.tool("t24", "上揃え", I.top)}${this.tool("t24 sel", "上下中央揃え", I.mid)}${this.tool("t24", "下揃え", I.bot)}
              <span class="vr"></span>${this.tool("t20", "方向", I.orient)}${this.drop("方向の一覧")}
            </div>
            <div class="row g2">
              ${this.tool("t24", "左揃え", I.left)}${this.tool("t24 sel", "中央揃え", I.center)}${this.tool("t24", "右揃え", I.right)}
              <span class="vr"></span>${this.tool("t24", "インデントを減らす", I.outdent, true)}${this.tool("t24", "インデントを増やす", I.indent, true)}
            </div>
          </div>
          <span class="vr tall"></span>
          <div class="rows2">
            <button class="line spread" disabled>${I.wrap}<span>折り返して全体を表示する</span></button>
            <button class="line spread" disabled>${I.merge}セルを結合して中央揃え${chevron("#b1b1b1")}</button>
          </div>
        </div>
        ${this.foot("配置", "off")}
      </div>

      <div class="grp w-num">
        <div class="body pad"><div class="rows2">
          <div class="combo numfmt"><select aria-label="表示形式" disabled><option>標準</option></select>${chevron("#b1b1b1")}</div>
          <div class="row">
            ${this.tool("t24", "通貨", I.currency, true)}${this.drop("通貨の種類", true)}${this.tool("t28", "パーセント", I.percent, true)}${this.tool("t26", "桁区切り", I.comma, true)}
            <span class="vr"></span>
            ${this.tool("t28", "小数点以下を増やす", I.decInc, true)}${this.tool("t24", "小数点以下を減らす", I.decDec, true)}
          </div>
        </div></div>
        ${this.foot("数値", "off")}
      </div>

      <div class="grp w-style">
        <div class="body pad3">
          ${this.big("b60", I.condFmt, ["条件付き", "書式"], true, true)}
          ${this.big("b66", I.tableFmt, ["テーブルとして", "書式設定"], true, true)}
          ${this.big("b60", I.cellFmt, ["セルの", "スタイル"], true, true)}
        </div>
        ${this.foot("スタイル")}
      </div>

      <div class="grp w-cell">
        <div class="body pad">
          ${this.big("b44", I.insert, ["挿入", ""], true)}
          ${this.big("b44", I.remove, ["削除", ""], true)}
          ${this.big("b44", I.format, ["書式", ""], true)}
        </div>
        ${this.foot("セル")}
      </div>

      <div class="grp w-edit">
        <div class="body pad12">
          <div class="rows3">
            <button class="line apart" disabled>${I.sum}オート SUM${chevron("#b1b1b1")}</button>
            <button class="line" disabled>${I.fillDown}フィル${chevron("#b1b1b1")}</button>
            <button class="line">${I.erase}クリア${chevron()}</button>
          </div>
          <div class="body pad6">
            ${this.big("b66", I.sort, ["並べ替えと", "フィルター"], true, true)}
            ${this.big("b44", I.find, ["検索と", "選択"], true)}
          </div>
        </div>
        ${this.foot("編集")}
      </div>

      <div class="grp w-add">
        ${this.big("b58", I.addin, ["アド", "イン"], false)}
        ${this.foot("アドイン")}
      </div>

      <div class="grp w-data">
        <div class="body pad6">
          ${this.big("b46", I.analyze, ["データ", "分析"], false, true)}
          ${this.big("b44", I.copilot, ["Copilot"], false)}
        </div>
        ${this.foot("")}
      </div>

      <div class="grp w-labs">
        ${this.big("b66", I.labs, ["Excel", "Labs"], false)}
        ${this.foot("Excel Labs")}
      </div>
      <button class="fold" aria-label="リボンを折りたたむ">${icon(12, 12, svg`<path d="M1.500 8 6 3.500 10.500 8" stroke-width="1.300"/>`)}</button>
    </section>`;
  }

  private formulaBar() {
    return html`<section class="formula">
      <div class="box namebox"><input aria-label="名前ボックス" .value=${"グループ化 3"}><button aria-label="名前の一覧">${wideChevron()}</button></div>
      <span class="grip">${I.dots}</span>
      <div class="box fx">
        <button aria-label="キャンセル" disabled>${I.cancel}</button>
        <button aria-label="入力" disabled>${I.check}</button>
        <button aria-label="関数の挿入"><em>fx</em></button>
        <button aria-label="関数の一覧">${wideChevron("#999")}</button>
      </div>
      <div class="box entry"><input aria-label="数式バー"><button aria-label="数式バーの展開">${wideChevron("#888")}</button></div>
    </section>`;
  }

  private menuRow(r: MenuRow) {
    if (r.sep) return html`<hr>`;
    const tone = r.off ? "#b1b1b1" : "#333";
    return html`<button role="menuitem" class=${classMap({ hot: !!r.hot })} ?disabled=${r.off}>
      <span class="g">${r.glyph ?? nothing}</span>
      <span>${r.label}(<u>${r.key}</u>)${r.tail ?? ""}</span>
      ${r.sub ? html`<span class="arrow">${r.sub === "split" ? html`<span class="vr"></span>` : nothing}${I.sub(tone)}</span>` : nothing}
    </button>`;
  }

  private drawing() {
    const dots = [[0, 0], [50, 0], [100, 0], [0, 50], [100, 50], [0, 100], [50, 100], [100, 100]];
    return html`<div class="layer">
      <div class="cards">
        ${CARDS.map(c => html`<section class="card">
          <h2>${c.title}</h2>
          <ul class=${classMap({ items: true, four: c.items.length === 4 })}>${c.items.map(t => html`<li>${t}</li>`)}</ul>
        </section>`)}
      </div>
      <div class="frame"><i class="stem"></i>${dots.map(([x, y]) => html`<i style="left:${x}%;top:${y}%"></i>`)}</div>
      <div class="spin">${I.rotate}</div>

      <div class="mini" role="toolbar">
        <button><span class="pic">${I.shapeStyle}${chevron()}</span><span class="cap">スタイル</span></button>
        <button><span class="pic">${I.shapeFill}${chevron()}</span><span class="cap">塗りつぶし</span></button>
        <button><span class="pic">${I.shapeLine}${chevron()}</span><span class="cap">枠線</span></button>
      </div>

      <div class="menu main" role="menu">
        <input type="text" placeholder="メニューの検索" aria-label="メニューの検索">
        <button role="menuitem"><span class="g">${I.cut}</span><span>切り取り(<u>T</u>)</span></button>
        <button role="menuitem"><span class="g">${I.copy}</span><span>コピー(<u>C</u>)</span></button>
        <p class="head"><span class="g">${I.pasteSm}</span>貼り付けのオプション:</p>
        <button class="pasterow" role="menuitem" aria-label="貼り付け">${I.pasteMd}</button>
        ${MENU.map(r => this.menuRow(r))}
      </div>
      <div class="menu submenu" role="menu">${SUBMENU.map(r => this.menuRow(r))}</div>

      <div class="mark mark1"></div>
      <div class="mark mark2"></div>
      <div class="badge n19">⑲</div>
      <div class="badge n20">⑳</div>
      <div class="badge n21">㉑</div>
    </div>`;
  }

  private sheet() {
    return html`<main class="sheet">
      <div class="view">
        <table>
          <thead><tr><th class="corner">${I.corner}</th>${COLS.map(c => html`<th scope="col">${c}</th>`)}</tr></thead>
          <tbody>${ROWS.map(r => html`<tr><th scope="row">${r}</th>${COLS.map(() => html`<td></td>`)}</tr>`)}</tbody>
        </table>
      </div>
      <div class="vscroll">${I.up}<span class="bar"></span>${I.down}</div>
      ${this.drawing()}
    </main>`;
  }

  render() {
    return html`<div class="app">
      ${this.titleBar()}
      ${this.tabRow()}
      ${this.ribbon()}
      ${this.formulaBar()}
      ${this.sheet()}
      <nav class="sheets">
        <div class="nav"><button aria-label="前のシート">${I.prev}</button><button aria-label="次のシート">${I.next}</button></div>
        <button class="sheettab"><span>Sheet1</span></button>
        <span class="vr"></span>
        <button class="add" aria-label="新しいシート">${I.plus(11)}</button>
        <span class="split">${I.dots}</span>
        <div class="hscroll">${I.back2}<span class="bar"></span>${I.fwd}</div>
      </nav>
      <footer class="status">
        <span>準備完了</span>
        <button class="rec" aria-label="マクロの記録">${I.macro}</button>
        <div class="views">
          ${this.tool("on", "標準", I.normal)}${this.tool("", "ページ レイアウト", I.page)}${this.tool("", "改ページ プレビュー", I.breaks)}
        </div>
        <div class="zoom">
          <button aria-label="縮小">${I.minus}</button>
          <input type="range" aria-label="ズーム" min="0" max="200" .value=${"100"}>
          <button aria-label="拡大">${I.plus(8)}</button>
        </div>
        <span class="pct">100%</span>
      </footer>
    </div>`;
  }
}
